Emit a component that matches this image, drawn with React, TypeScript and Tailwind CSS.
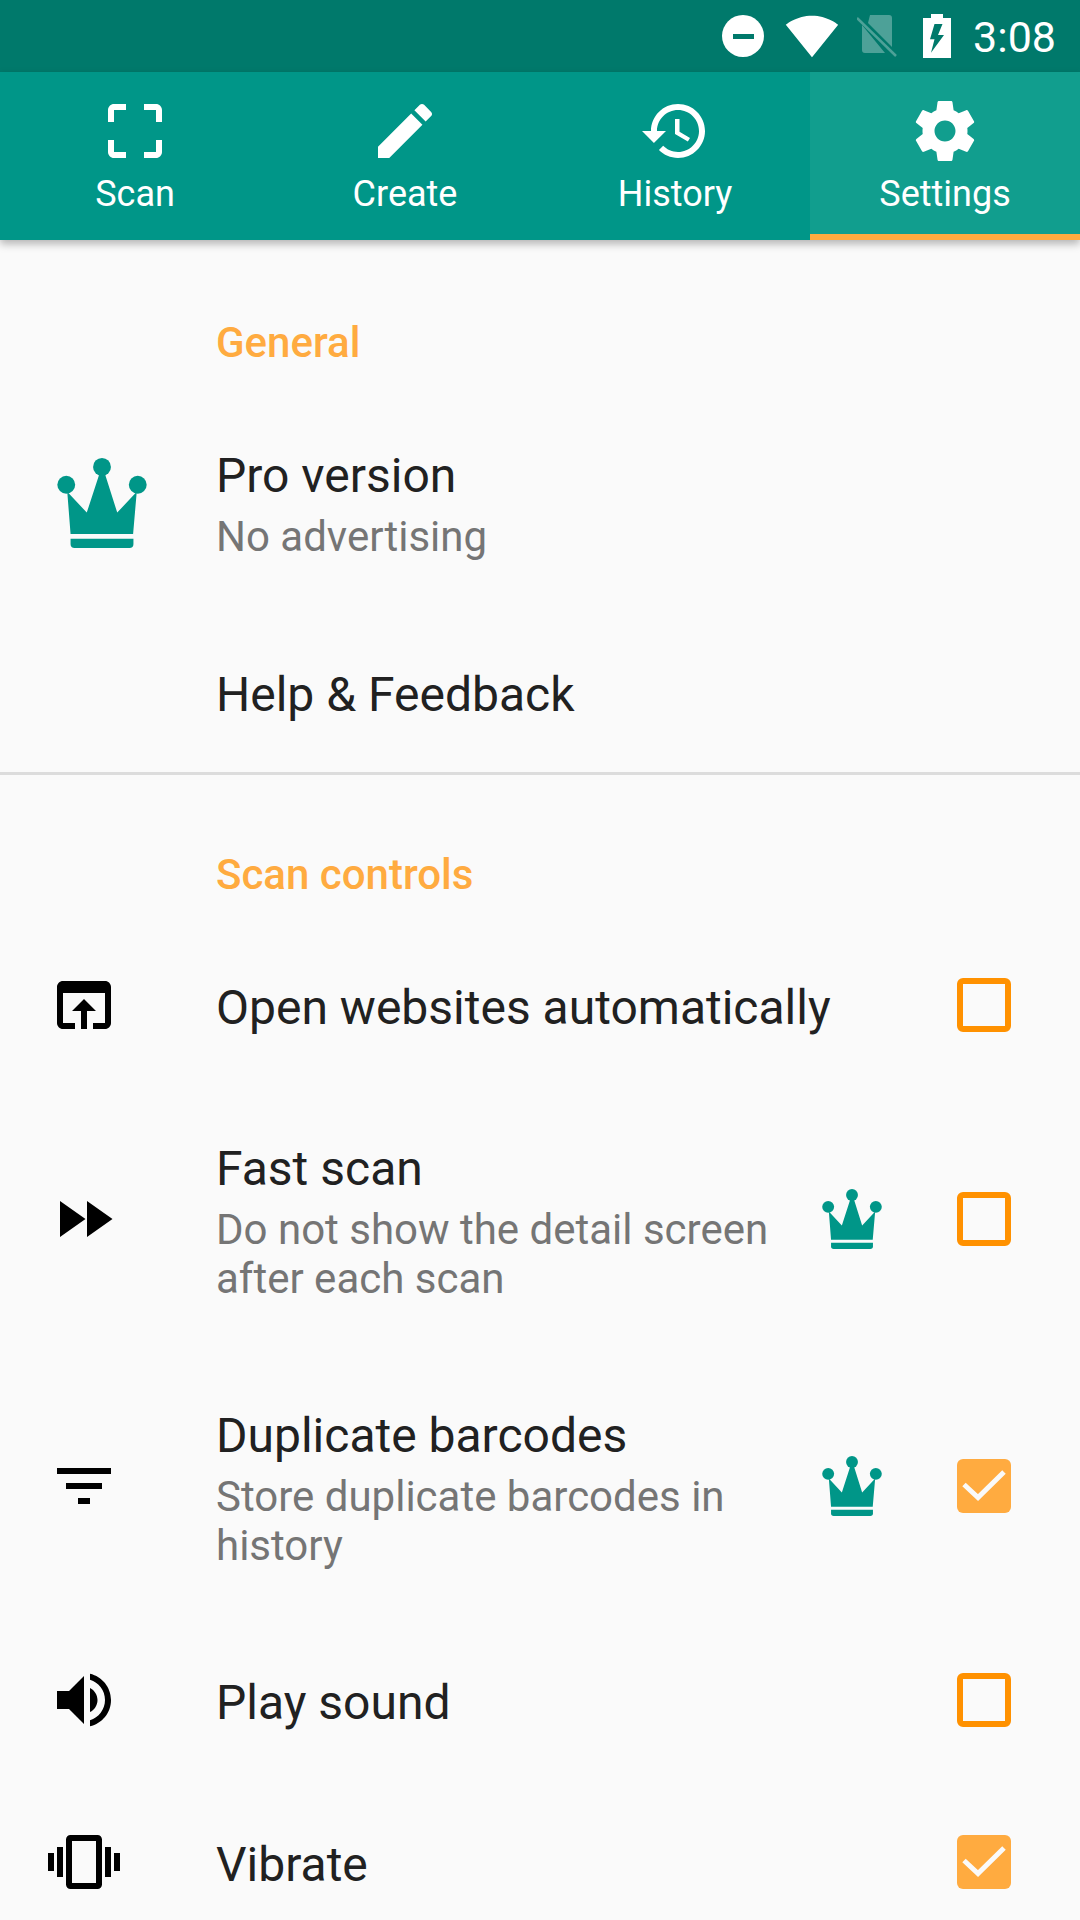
import React from "react";

const P = {
  scan: "M3 5v4h2V5h4V3H5c-1.1 0-2 .9-2 2zm2 10H3v4c0 1.1.9 2 2 2h4v-2H5v-4zm14 4h-4v2h4c1.1 0 2-.9 2-2v-4h-2v4zm0-16h-4v2h4v4h2V5c0-1.1-.9-2-2-2z",
  create: "M3 17.25V21h3.75L17.81 9.94l-3.75-3.75L3 17.25zM20.71 7.04c.39-.39.39-1.02 0-1.41l-2.34-2.34c-.39-.39-1.02-.39-1.41 0l-1.83 1.83 3.75 3.75 1.83-1.83z",
  history: "M13 3c-4.97 0-9 4.03-9 9H1l3.89 3.89.07.14L9 12H6c0-3.87 3.13-7 7-7s7 3.13 7 7-3.13 7-7 7c-1.93 0-3.68-.79-4.94-2.06l-1.42 1.42C8.27 19.99 10.51 21 13 21c4.97 0 9-4.03 9-9s-4.03-9-9-9zm-1 5v5l4.28 2.54.72-1.21-3.5-2.08V8H12z",
  settings: "M19.43 12.98c.04-.32.07-.64.07-.98s-.03-.66-.07-.98l2.11-1.65c.19-.15.24-.42.12-.64l-2-3.46c-.12-.22-.39-.3-.61-.22l-2.49 1c-.52-.4-1.08-.73-1.69-.98l-.38-2.65C14.46 2.18 14.25 2 14 2h-4c-.25 0-.46.18-.49.42l-.38 2.65c-.61.25-1.17.59-1.69.98l-2.49-1c-.23-.09-.49 0-.61.22l-2 3.46c-.13.22-.07.49.12.64l2.11 1.65c-.04.32-.07.65-.07.98s.03.66.07.98l-2.11 1.65c-.19.15-.24.42-.12.64l2 3.46c.12.22.39.3.61.22l2.49-1c.52.4 1.08.73 1.69.98l.38 2.65c.03.24.24.42.49.42h4c.25 0 .46-.18.49-.42l.38-2.65c.61-.25 1.17-.59 1.69-.98l2.49 1c.23.09.49 0 .61-.22l2-3.46c.12-.22.07-.49-.12-.64l-2.11-1.65zM12 15.5c-1.93 0-3.5-1.57-3.5-3.5s1.57-3.5 3.5-3.5 3.5 1.57 3.5 3.5-1.57 3.5-3.5 3.5z",
  open: "M19 4H5c-1.11 0-2 .9-2 2v12c0 1.1.89 2 2 2h4v-2H5V8h14v10h-4v2h4c1.1 0 2-.9 2-2V6c0-1.1-.89-2-2-2zm-7 6l-4 4h3v6h2v-6h3l-4-4z",
  fast: "M4 18l8.5-6L4 6v12zm9-12v12l8.5-6L13 6z",
  filter: "M10 18h4v-2h-4v2zM3 6v2h18V6H3zm3 7h12v-2H6v2z",
  volume: "M3 9v6h4l5 5V4L7 9H3zm13.5 3c0-1.77-1.02-3.29-2.5-4.03v8.05c1.48-.73 2.5-2.25 2.5-4.02zM14 3.23v2.06c2.89.86 5 3.54 5 6.71s-2.11 5.85-5 6.71v2.06c4.01-.91 7-4.49 7-8.77s-2.99-7.86-7-8.77z",
  vibrate: "M0 15h2V9H0v6zm3 2h2V7H3v10zm19-8v6h2V9h-2zm-3 8h2V7h-2v10zM16.5 3h-9C6.67 3 6 3.67 6 4.5v15c0 .83.67 1.5 1.5 1.5h9c.83 0 1.5-.67 1.5-1.5v-15c0-.83-.67-1.5-1.5-1.5zM16 19H8V5h8v14z",
};

function Ico({ d, className }: { d: string; className?: string }) {
  return (
    <svg viewBox="0 0 24 24" className={className} fill="currentColor">
      <path d={d} />
    </svg>
  );
}

function Crown({ className }: { className?: string }) {
  return (
    <svg viewBox="0 0 270 272" className={className} fill="#009688">
      <circle cx="27" cy="81" r="27" />
      <circle cx="135" cy="27" r="27" />
      <circle cx="243" cy="81" r="27" />
      <path d="M30 102L89 165L127 48H144L181 165L240 102L229 230H40Z" />
      <path d="M40 244H230V260Q230 272 218 272H52Q40 272 40 260Z" />
    </svg>
  );
}

function Check({ on }: { on: boolean }) {
  if (on) {
    return (
      <div className="w-[54px] h-[54px] rounded-[6px] bg-[#ffab40]">
        <svg viewBox="0 0 54 54" className="w-[54px] h-[54px]" fill="none" stroke="#fafafa" strokeWidth="5">
          <path d="M7 25.5L21 38.5L47 13" />
        </svg>
      </div>
    );
  }
  return <div className="w-[54px] h-[54px] rounded-[6px] border-[6px] border-[#ff9100]" />;
}

function Row({
  icon,
  title,
  sub,
  crown,
  check,
  tight,
}: {
  icon?: string;
  title: string;
  sub?: React.ReactNode;
  crown?: boolean;
  check?: boolean;
  tight?: boolean;
}) {
  const lift = sub ? "pb-[2px]" : "";
  return (
    <div className={`flex items-center pt-[51px] ${tight ? "pb-[50px]" : "pb-[51px]"} pl-[48px] pr-[69px]`}>
      <div className={`w-[72px] mr-[96px] shrink-0 text-black ${lift}`}>
        <div className="h-[60px] flex items-center">
          {icon && <Ico d={icon} className="w-[72px] h-[72px] shrink-0" />}
        </div>
      </div>
      <div className="flex-1 min-w-0">
        <div className={`h-[60px] text-[48px] text-[#212121] ${sub ? "leading-[64px]" : "leading-[66px]"}`}>{title}</div>
        {sub && <div className="mt-[8px] -mb-[1px] text-[42px] leading-[49px] text-[#757575]">{sub}</div>}
      </div>
      {crown && (
        <div className={`mr-[75px] shrink-0 ${lift}`}>
          <Crown className="w-[60px] h-[60px]" />
        </div>
      )}
      {check !== undefined && (
        <div className={`shrink-0 ${lift}`}>
          <Check on={check} />
        </div>
      )}
    </div>
  );
}

function Header({ children, spacing }: { children: React.ReactNode; spacing: string }) {
  return (
    <div className={`${spacing} h-[60px] pl-[216px] text-[42px] leading-[62px] font-medium text-[#ffab40]`}>
      {children}
    </div>
  );
}

function Tab({ d, label, active }: { d: string; label: string; active?: boolean }) {
  return (
    <div
      className={`h-[168px] pt-[23px] flex flex-col items-center text-white ${
        active ? "bg-[#119e8e] border-b-[6px] border-[#ffab40]" : ""
      }`}
    >
      <Ico d={d} className="w-[72px] h-[72px]" />
      <div className="text-[36px] leading-[54px]">{label}</div>
    </div>
  );
}

export default function App() {
  return (
    <div
      className="w-[1080px] h-[1920px] overflow-hidden bg-[#fafafa] relative"
      style={{ fontFamily: "Roboto, sans-serif" }}
    >
      <div className="h-[72px] bg-[#00796b] flex items-center justify-end pr-[24px] text-white">
        <svg viewBox="0 0 42 42" className="w-[42px] h-[42px] mr-[21px]">
          <circle cx="21" cy="21" r="21" fill="#fff" />
          <rect x="11" y="19" width="21" height="5" fill="#00796b" />
        </svg>
        <svg viewBox="0 0 24 24" className="w-[54px] h-[54px] mr-[18px]" fill="#fff">
          <path d="M12.01 21.49L23.64 7c-.45-.34-4.93-4-11.64-4C5.28 3 .81 6.66.36 7l11.63 14.49.01.01.01-.01z" />
        </svg>
        <svg viewBox="0 0 40 42" className="w-[40px] h-[42px] mr-[26px]" opacity="0.3">
          <path d="M13 0H32Q35 0 35 3V32L11 8ZM5 10L28 38H8Q5 38 5 35Z" fill="#fff" />
          <path d="M0 3L39 41" stroke="#fff" strokeWidth="2.5" />
        </svg>
        <svg viewBox="0 0 28 44" className="w-[28px] h-[44px] mr-[22px]" fill="#fff">
          <path fillRule="evenodd" d="M8 0H20V4H28V44H0V4H8ZM11.5 10H19.5L15 21H21L8 38.7L11.5 25.3H7Z" />
        </svg>
        <div className="text-[43px] leading-[72px] pt-[2px]">3:08</div>
      </div>

      <div className="relative grid grid-cols-4 h-[168px] bg-[#009688] shadow-[0_4px_8px_rgba(0,0,0,0.28)]">
        <Tab d={P.scan} label="Scan" />
        <Tab d={P.create} label="Create" />
        <Tab d={P.history} label="History" />
        <Tab d={P.settings} label="Settings" active />
      </div>

      <Header spacing="mt-[72px] mb-[22px]">General</Header>
      <div className="flex items-center pt-[51px] pb-[50px] pl-[57px]">
        <Crown className="w-[90px] h-[90px] mr-[69px] shrink-0" />
        <div>
          <div className="h-[60px] text-[48px] leading-[62px] text-[#212121]">Pro version</div>
          <div className="mt-[7px] text-[42px] leading-[49px] text-[#757575]">No advertising</div>
        </div>
      </div>
      <Row title="Help &amp; Feedback" />
      <div className="h-[3px] bg-[#dcdcdc] -mt-[1px]" />

      <Header spacing="mt-[69px] mb-[20px]">Scan controls</Header>
      <Row icon={P.open} title="Open websites automatically" check={false} />
      <Row
        icon={P.fast}
        title="Fast scan"
        sub={
          <>
            Do not show the detail screen
            <br />
            after each scan
          </>
        }
        crown
        check={false}
      />
      <Row
        icon={P.filter}
        title="Duplicate barcodes"
        sub={
          <>
            Store duplicate barcodes in
            <br />
            history
          </>
        }
        crown
        check
        tight
      />
      <Row icon={P.volume} title="Play sound" check={false} />
      <Row icon={P.vibrate} title="Vibrate" check />
    </div>
  );
}
